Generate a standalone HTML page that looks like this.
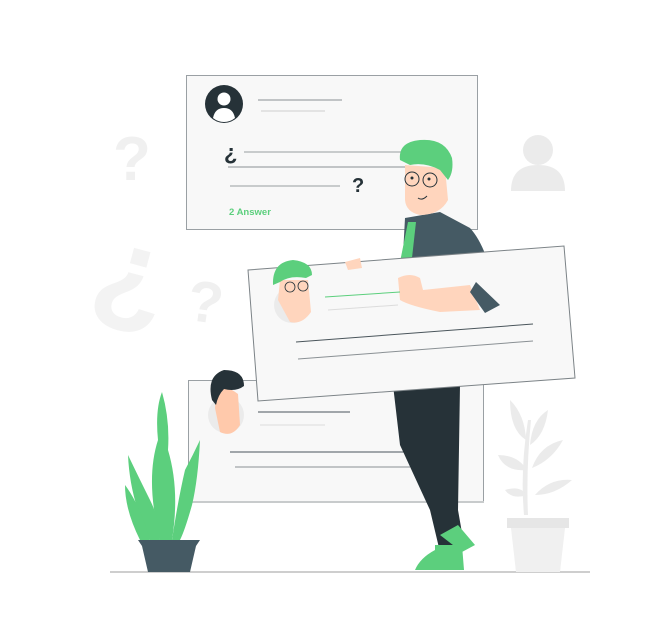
<!DOCTYPE html>
<html><head><meta charset="utf-8"><style>
html,body{margin:0;padding:0;background:#fff;width:669px;height:635px;overflow:hidden}
svg{display:block}
text{font-family:"Liberation Sans",sans-serif;font-weight:bold}
</style></head><body>
<svg width="669" height="635" viewBox="0 0 669 635">
<text x="113" y="180" font-size="62" fill="#f0f0f0">?</text>
<text x="188" y="322" font-size="58" fill="#f0f0f0" transform="rotate(8 205 300)">?</text>
<text x="95" y="310" font-size="120" fill="#f3f3f3" transform="rotate(15 125 280)">¿</text>
<circle cx="538" cy="150" r="15" fill="#ebebeb"/>
<path d="M511 191 Q511 165 538 165 Q565 165 565 191 Z" fill="#ebebeb"/>

<line x1="110" y1="572" x2="590" y2="572" stroke="#9e9e9e" stroke-width="1"/>

<rect x="186.5" y="75.5" width="291" height="154" fill="#f8f8f8" stroke="#9aa0a4"/>
<circle cx="224" cy="104" r="19" fill="#263238"/>
<circle cx="224" cy="99" r="6.5" fill="#fff"/>
<path d="M213 118 Q215 108 224 108 Q233 108 235 118 Q230 122 224 122 Q218 122 213 118Z" fill="#fff"/>
<line x1="258" y1="100" x2="342" y2="100" stroke="#8a9094" stroke-width="1"/>
<line x1="261" y1="111" x2="325" y2="111" stroke="#dcdcdc" stroke-width="1.5"/>
<text x="224" y="160" font-size="22" fill="#263238">¿</text>
<line x1="244" y1="152" x2="405" y2="152" stroke="#b8bcbe" stroke-width="1.5"/>
<line x1="228" y1="167" x2="405" y2="167" stroke="#8a9094" stroke-width="1"/>
<line x1="230" y1="186" x2="340" y2="186" stroke="#b8bcbe" stroke-width="1.5"/>
<text x="352" y="192" font-size="20" fill="#263238">?</text>
<text x="229" y="215" font-size="9.5" fill="#5ccf7d">2 Answer</text>

<rect x="188.5" y="380.5" width="295" height="121" fill="#f8f8f8" stroke="#9aa0a4"/>
<line x1="188" y1="502" x2="484" y2="502" stroke="#c8cbcc" stroke-width="2"/>
<circle cx="226" cy="415" r="18" fill="#ebebeb"/>
<path d="M216 392 Q226 384 238 394 L240 425 Q232 438 220 432 L215 408 Z" fill="#ffc9ab"/>
<path d="M212 400 Q206 376 224 370 Q244 370 244 386 Q236 392 224 389 Q218 395 216 405 Z" fill="#263238"/>
<line x1="258" y1="412" x2="350" y2="412" stroke="#4a555b" stroke-width="1"/>
<line x1="260" y1="425" x2="325" y2="425" stroke="#dcdcdc" stroke-width="1"/>
<line x1="230" y1="452" x2="405" y2="452" stroke="#4a555b" stroke-width="1"/>
<line x1="235" y1="467" x2="410" y2="467" stroke="#8a9094" stroke-width="1"/>

<path d="M393 385 L460 385 L458 510 L465 550 L440 552 L430 510 L400 445 Z" fill="#263238"/>
<path d="M440 535 L458 525 L475 545 L462 552 Z" fill="#5ccf7d"/>
<path d="M435 545 L462 545 L464 570 L415 570 Q420 558 435 550Z" fill="#5ccf7d"/>

<path d="M405 218 L440 212 L470 228 Q490 250 498 308 L480 312 L470 280 L460 300 L400 310 Z" fill="#455a64"/>
<path d="M408 222 L416 222 L412 258 L400 262 Z" fill="#5ccf7d"/>
<path d="M405 165 L445 168 L448 200 Q440 215 420 215 Q406 212 405 200 Z" fill="#ffd5bd"/>
<path d="M400 160 Q398 142 420 140 Q445 138 452 158 Q454 172 448 180 L440 170 Q425 162 410 165 Z" fill="#5ccf7d"/>
<circle cx="412" cy="179" r="7" fill="none" stroke="#263238" stroke-width="1"/>
<circle cx="430" cy="180" r="7" fill="none" stroke="#263238" stroke-width="1"/>
<circle cx="412" cy="178" r="1.5" fill="#263238"/><circle cx="429" cy="179" r="1.5" fill="#263238"/>
<path d="M418 198 Q422 201 427 196" stroke="#263238" fill="none"/>

<path d="M248 270 L564 246 L575 378 L258 401 Z" fill="#f8f8f8" stroke="#7c8387" stroke-width="1"/>
<path d="M345 262 L360 258 L362 268 L348 270Z" fill="#ffd5bd"/>
<path d="M398 278 Q410 272 420 278 L423 290 L470 285 L480 310 L440 312 Q410 306 400 300 Z" fill="#ffd5bd"/>
<path d="M476 282 L500 305 L485 313 L470 292 Z" fill="#455a64"/>
<circle cx="292" cy="305" r="18" fill="#ebebeb"/>
<path d="M280 280 L308 280 L311 312 Q302 325 290 322 L278 300 Z" fill="#ffd5bd"/>
<path d="M273 285 Q272 262 293 260 Q312 262 312 275 L306 278 Q290 275 280 282 Z" fill="#5ccf7d"/>
<circle cx="290" cy="287" r="5" fill="none" stroke="#263238" stroke-width="0.8"/>
<circle cx="303" cy="286" r="5" fill="none" stroke="#263238" stroke-width="0.8"/>
<line x1="325" y1="297" x2="400" y2="292" stroke="#5ccf7d" stroke-width="1"/>
<line x1="328" y1="310" x2="398" y2="305" stroke="#dcdcdc" stroke-width="1"/>
<line x1="296" y1="342" x2="533" y2="324" stroke="#4a555b" stroke-width="1"/>
<line x1="298" y1="359" x2="533" y2="341" stroke="#8a9094" stroke-width="1"/>

<g fill="#5ccf7d">
<path d="M160 540 Q145 480 158 440 Q155 410 162 392 Q170 420 168 450 Q180 490 172 540Z"/>
<path d="M150 540 Q130 500 128 455 Q140 480 150 500 Q160 520 160 540Z"/>
<path d="M172 540 Q178 500 185 470 Q193 455 200 440 Q198 480 192 505 Q185 530 180 540Z"/>
<path d="M140 540 Q125 510 125 485 Q140 505 150 540Z"/>
</g>
<path d="M138 540 L200 540 L196 546 L190 572 L148 572 L142 546 Z" fill="#455a64"/>

<g fill="#ebebeb">
<path d="M524 515 Q520 470 528 420 L531 420 Q526 470 528 515Z"/>
<path d="M510 400 Q525 415 526 440 Q510 430 510 400Z"/>
<path d="M548 410 Q545 435 530 445 Q532 420 548 410Z"/>
<path d="M498 455 Q518 455 527 470 Q505 472 498 455Z"/>
<path d="M563 440 Q552 460 532 468 Q540 445 563 440Z"/>
<path d="M505 490 Q520 485 527 495 Q512 500 505 490Z"/>
<path d="M572 480 Q555 495 535 495 Q550 478 572 480Z"/>
</g>
<rect x="507" y="518" width="62" height="10" fill="#e6e6e6"/>
<path d="M511 528 L565 528 L560 572 L516 572 Z" fill="#f0f0f0"/>
</svg>
</body></html>
